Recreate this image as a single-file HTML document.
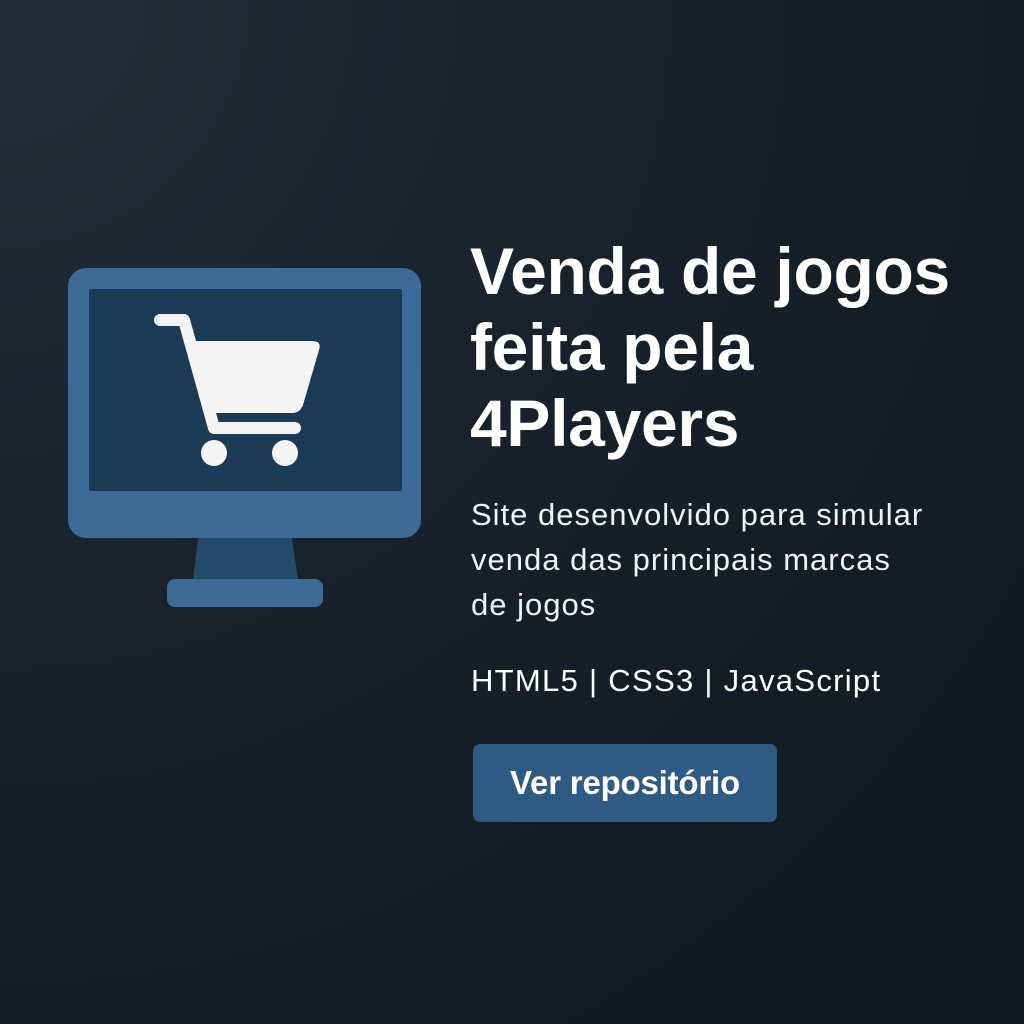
<!DOCTYPE html>
<html><head><meta charset="utf-8"><style>
html,body{margin:0;padding:0}
body{width:1024px;height:1024px;overflow:hidden;position:relative;background:radial-gradient(ellipse at 0% 0%,#222e3a 0%,#17202a 50%,#10171f 100%);font-family:"Liberation Sans",sans-serif;color:#fff}
.t{position:absolute;left:471px;white-space:nowrap}
h1{position:absolute;left:470px;top:233px;margin:0;font-size:66px;line-height:76px;font-weight:bold;letter-spacing:-0.3px}
.sub{top:492px;font-size:31px;line-height:45px;color:#f0f2f4;letter-spacing:1px}
.tech{top:662px;font-size:31px;line-height:38px;letter-spacing:1.3px}
.btn{position:absolute;left:473px;top:744px;width:304px;height:78px;background:#2f5a84;border-radius:7px;font-size:33px;font-weight:bold;text-align:center;line-height:78px;letter-spacing:-0.2px}
</style></head><body>
<svg width="1024" height="1024" style="position:absolute;left:0;top:0">
<rect x="68" y="268" width="353" height="270" rx="18" fill="#3d6a96"/>
<rect x="89" y="289" width="313" height="202" rx="2" fill="#1b3a55"/>
<polygon points="198,538 292,538 298,580 193,580" fill="#244a6c"/>
<rect x="167" y="579" width="156" height="28" rx="8" fill="#3d6a96"/>
<g fill="#f4f4f4">
<path d="M160 320 H184 L214 428 H295" stroke="#f4f4f4" stroke-width="12" stroke-linecap="round" stroke-linejoin="round" fill="none"/>
<path d="M184 341 H312 Q322 341 319 350 L303 405 Q300 413 292 413 H208 Z"/>
<circle cx="214" cy="453" r="13"/>
<circle cx="285" cy="453" r="13"/>
</g>
</svg>
<h1>Venda de jogos<br>feita pela<br>4Players</h1>
<div class="t sub">Site desenvolvido para simular<br>venda das principais marcas<br>de jogos</div>
<div class="t tech">HTML5 | CSS3 | JavaScript</div>
<div class="btn">Ver repositório</div>
</body></html>
